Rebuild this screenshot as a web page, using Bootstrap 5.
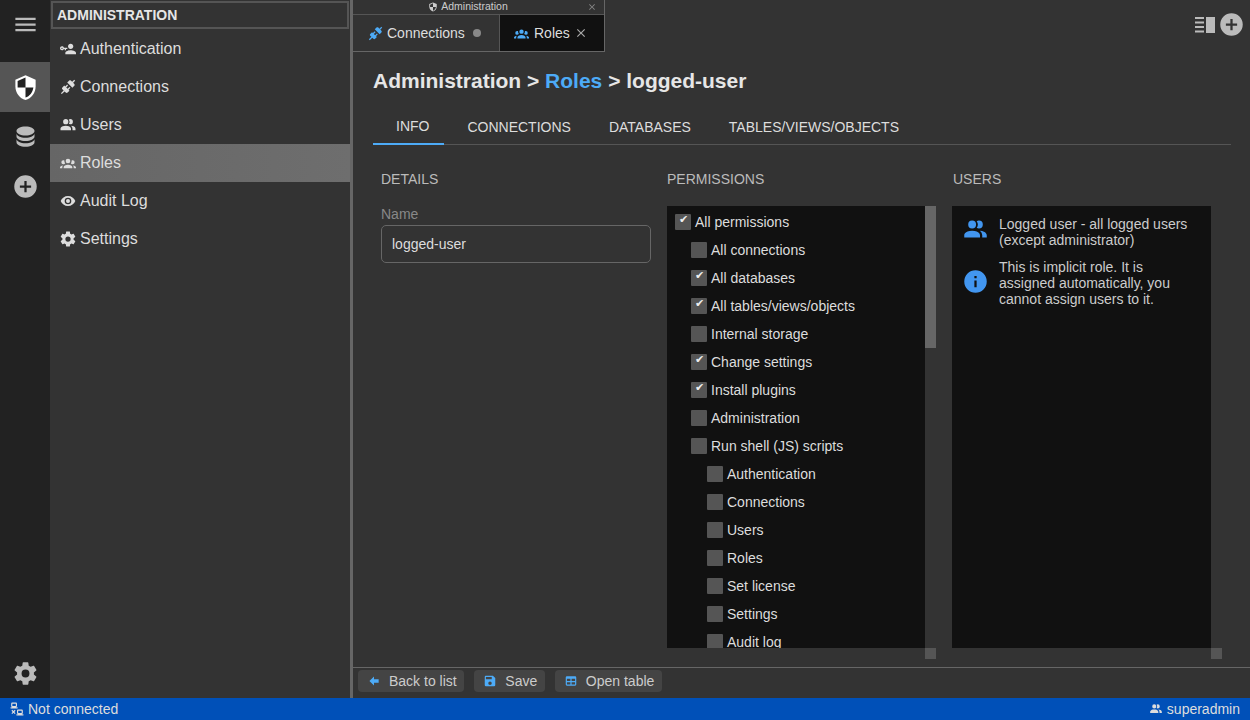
<!DOCTYPE html>
<html lang="en"><head><meta charset="utf-8"><title>Roles</title>
<link rel="stylesheet" href="https://cdn.jsdelivr.net/npm/bootstrap@5.3.0/dist/css/bootstrap.min.css">
<style>
html,body{height:100%;overflow:hidden}
body{background:#333;color:#ddd;font-family:"Liberation Sans",Arial,sans-serif;font-size:14px}
svg{fill:currentColor;display:block;flex:none}
.app-root{height:720px;width:1250px}
.app-body{height:698px}
.rail{width:50px;background:#222;color:#bbb}
.rail-btn{height:50px;width:50px}
.rail-btn svg{width:27px;height:27px}
.rail-btn.on{background:#555;color:#fff}
.rail-menu{height:48px;margin-bottom:14px}
.rail-db{height:49px}
.rail-bottom{height:50px}
.side{width:300px;background:#333}
.side-title{height:28px;margin:1px;border:2px solid #555;font-weight:700;color:#e6e6e6;padding-left:4px;line-height:24px}
.side-item{height:38px;font-size:16px;padding-left:10px;color:#ddd;gap:4px}
.side-item svg{width:16px;height:16px}
.side-item svg.ico-big{width:18px;height:18px;margin:0 -1px}
.side-item.on{background:linear-gradient(90deg,#666,#6e6e6e)}
.split{width:3px;background:#666}
.main-col{width:897px}
.tabbar{height:52px}
.tabgroup{width:252px;border-right:1px solid #666;border-bottom:1px solid #666}
.tabhead{height:15px;border-bottom:1px solid #555;font-size:10.5px;color:#ccc;gap:3px;padding-right:21px}
.tabhead-x{position:absolute;right:7px;top:2px;color:#888}
.tabhead-x svg{width:10px;height:10px}
.tabrow{height:36px}
.tab-a{width:147px;padding-left:15px;border-right:1px solid #555;gap:4px;color:#ddd}
.tab-b{width:104px;background:#111;padding-left:14px;gap:5px;color:#ddd}
.tab-a svg,.tab-b svg{width:15px;height:15px}
.blue{color:#4dabf7}
.tabdot{width:8px;height:8px;border-radius:50%;background:#888;margin-left:4px}
.tab-b .tabx{color:#aaa;width:14px;height:14px;margin-left:-1px}
.topright{gap:3px;padding:11px 5px 0 0;color:#bbb}
.topright .panel-ico{width:20px;height:16px;margin-top:6px}
.topright .plus-ico{width:27px;height:27px}
.page{padding:0 19px 0 20px;height:615px}
.page-title{font-size:21px;font-weight:700;color:#e6e6e6;margin:0;height:44px;padding-top:16px;line-height:26px}
.page-tabs{margin-top:17px;border-bottom:1px solid #555;height:32px}
.ptab{padding:0 15px 0 23px;line-height:28px;color:#ddd;text-transform:uppercase;height:31px}
.ptab.on{border-bottom:2px solid #4dabf7;margin-bottom:-1px;line-height:26px;height:32px}
.cols{padding-left:8px;height:524px}
.colm{width:286px;flex:none;padding-top:26px}
.colm-h{color:#bbb;text-transform:uppercase;line-height:16px;height:35px}
.lbl{color:#888;line-height:16px}
.inp{width:270px;height:38px;border:1px solid #666;border-radius:5px;background:#333;color:#ddd;padding:0 10px;margin-top:3px;font-size:14px;font-family:inherit;outline:0}
.scrollbox{display:grid;grid-template-columns:258px 11px;grid-template-rows:442px 11px;width:269px}
.sb-view{background:#111;overflow:hidden}
.sb-thumb{height:142px;background:#666}
.sb-corner{background:#555}
.perm-inner{padding-top:2px}
.perm{height:28px;gap:4px;color:#ddd;white-space:nowrap;padding-left:8px}
.lv1{padding-left:24px}.lv2{padding-left:40px}
.cb{width:16px;height:16px;background:#555;border-radius:1px;color:#eee;flex:none;font-size:11px;line-height:11px;text-align:center;overflow:hidden}
.users-box{grid-template-columns:259px 11px;width:270px;margin-left:-1px}
.urow{gap:10px;padding:10px 0 0 10px;line-height:16px;color:#ccc}
.urow svg{width:27px;height:27px;color:#4296f0;margin-top:0}
.urow+.urow{padding-top:11px}
.urow+.urow svg{margin-top:9px}
.bottombar{height:31px;border-top:1px solid #666;padding:2px 0 0 5px;gap:10px}
.bbtn{height:22px;background:#444;border-radius:4px;color:#ccc;padding:0 7.6px 0 9px;gap:8px;line-height:22px}
.bbtn svg{width:14px;height:14px;color:#4dabf7}
.statusbar{height:22px;background:#0050b8;color:#ddd;padding:0 10px;line-height:22px}
.statusbar svg{width:14px;height:14px}
</style></head><body>
<div class="app-root d-flex flex-column">
<div class="app-body d-flex">
 <nav class="rail d-flex flex-column">
  <div class="rail-btn rail-menu d-flex align-items-center justify-content-center"><svg viewBox="0 0 24 24"><path d="M3,6H21V8H3V6M3,11H21V13H3V11M3,16H21V18H3V16Z"/></svg></div>
  <div class="rail-btn on d-flex align-items-center justify-content-center"><svg viewBox="0 0 24 24"><path d="M12,1L3,5V11C3,16.55 6.84,21.74 12,23C17.16,21.74 21,16.55 21,11V5L12,1Z"/><path fill="#222" d="M12,3.2L5,6.3V12H12V3.2M12,12V20.9C15.7,19.9 18.4,16.3 19,12H12Z"/></svg></div>
  <div class="rail-btn rail-db d-flex align-items-center justify-content-center"><svg viewBox="0 0 24 24"><path d="M12,3C7.58,3 4,4.79 4,7C4,9.21 7.58,11 12,11C16.42,11 20,9.21 20,7C20,4.79 16.42,3 12,3M4,9V12C4,14.21 7.58,16 12,16C16.42,16 20,14.21 20,12V9C20,11.21 16.42,13 12,13C7.58,13 4,11.21 4,9M4,14V17C4,19.21 7.58,21 12,21C16.42,21 20,19.21 20,17V14C20,16.21 16.42,18 12,18C7.58,18 4,16.21 4,14Z"/></svg></div>
  <div class="rail-btn d-flex align-items-center justify-content-center"><svg viewBox="0 0 24 24"><path d="M17,13H13V17H11V13H7V11H11V7H13V11H17M12,2A10,10 0 0,0 2,12A10,10 0 0,0 12,22A10,10 0 0,0 22,12A10,10 0 0,0 12,2Z"/></svg></div>
  <div class="rail-btn rail-bottom mt-auto d-flex align-items-center justify-content-center"><svg viewBox="0 0 24 24"><path d="M12,15.5A3.5,3.5 0 0,1 8.5,12A3.5,3.5 0 0,1 12,8.5A3.5,3.5 0 0,1 15.5,12A3.5,3.5 0 0,1 12,15.5M19.43,12.97C19.47,12.65 19.5,12.33 19.5,12C19.5,11.67 19.47,11.34 19.43,11L21.54,9.37C21.73,9.22 21.78,8.95 21.66,8.73L19.66,5.27C19.54,5.05 19.27,4.96 19.05,5.05L16.56,6.05C16.04,5.66 15.5,5.32 14.87,5.07L14.5,2.42C14.46,2.18 14.25,2 14,2H10C9.75,2 9.54,2.18 9.5,2.42L9.13,5.07C8.5,5.32 7.96,5.66 7.44,6.05L4.95,5.05C4.73,4.96 4.46,5.05 4.34,5.27L2.34,8.73C2.21,8.95 2.27,9.22 2.46,9.37L4.57,11C4.53,11.34 4.5,11.67 4.5,12C4.5,12.33 4.53,12.65 4.57,12.97L2.46,14.63C2.27,14.78 2.21,15.05 2.34,15.27L4.34,18.73C4.46,18.95 4.73,19.03 4.95,18.95L7.44,17.94C7.96,18.34 8.5,18.68 9.13,18.93L9.5,21.58C9.54,21.82 9.75,22 10,22H14C14.25,22 14.46,21.82 14.5,21.58L14.87,18.93C15.5,18.67 16.04,18.34 16.56,17.94L19.05,18.95C19.27,19.03 19.54,18.95 19.66,18.73L21.66,15.27C21.78,15.05 21.73,14.78 21.54,14.63L19.43,12.97Z"/></svg></div>
 </nav>
 <aside class="side">
  <div class="side-title">ADMINISTRATION</div>
  <div class="side-item d-flex align-items-center"><svg viewBox="0 0 24 24"><path d="M11 10V12H9V14H7V12H5.8C5.4 13.2 4.3 14 3 14C1.3 14 0 12.7 0 11S1.3 8 3 8C4.3 8 5.4 8.8 5.8 10H11M3 10C2.4 10 2 10.4 2 11S2.4 12 3 12 4 11.6 4 11 3.6 10 3 10M16 14C18.7 14 24 15.3 24 18V20H8V18C8 15.3 13.3 14 16 14M16 12C13.8 12 12 10.2 12 8S13.8 4 16 4 20 5.8 20 8 18.2 12 16 12Z"/></svg>Authentication</div>
  <div class="side-item d-flex align-items-center"><svg viewBox="0 0 24 24"><path d="M21.4 7.5C22.2 8.3 22.2 9.6 21.4 10.3L18.6 13.1L10.8 5.3L13.6 2.5C14.4 1.7 15.7 1.7 16.5 2.5L18.3 4.3L21.3 1.3L22.7 2.7L19.7 5.7L21.4 7.5M15.6 13.3L14.2 11.9L11.4 14.7L9.3 12.6L12.1 9.8L10.7 8.4L7.9 11.2L6.4 9.8L3.6 12.6C2.8 13.4 2.8 14.7 3.6 15.4L5.4 17.2L1.4 21.2L2.8 22.6L6.8 18.6L8.6 20.4C9.4 21.2 10.7 21.2 11.4 20.4L14.2 17.6L12.8 16.2L15.6 13.3Z"/></svg>Connections</div>
  <div class="side-item d-flex align-items-center"><svg class="ico-big" viewBox="0 0 24 24"><path d="M16 17V19H2V17S2 13 9 13 16 17 16 17M12.5 7.5A3.5 3.5 0 1 0 9 11A3.5 3.5 0 0 0 12.5 7.5M15.94 13A5.32 5.32 0 0 1 18 17V19H22V17S22 13.37 15.94 13M15 4A3.39 3.39 0 0 0 13.07 4.59A5 5 0 0 1 13.07 10.41A3.39 3.39 0 0 0 15 11A3.5 3.5 0 0 0 15 4Z"/></svg>Users</div>
  <div class="side-item on d-flex align-items-center"><svg viewBox="0 0 24 24"><path d="M12,5.5A3.5,3.5 0 0,1 15.5,9A3.5,3.5 0 0,1 12,12.5A3.5,3.5 0 0,1 8.5,9A3.5,3.5 0 0,1 12,5.5M5,8C5.56,8 6.08,8.15 6.53,8.42C6.38,9.85 6.8,11.27 7.66,12.38C7.16,13.34 6.16,14 5,14A3,3 0 0,1 2,11A3,3 0 0,1 5,8M19,8A3,3 0 0,1 22,11A3,3 0 0,1 19,14C17.84,14 16.84,13.34 16.34,12.38C17.2,11.27 17.62,9.85 17.47,8.42C17.92,8.15 18.44,8 19,8M5.5,18.25C5.5,16.18 8.41,14.5 12,14.5C15.59,14.5 18.5,16.18 18.5,18.25V20H5.5V18.25M0,20V18.5C0,17.11 1.89,15.94 4.45,15.6C3.86,16.28 3.5,17.22 3.5,18.25V20H0M24,20H20.5V18.25C20.5,17.22 20.14,16.28 19.55,15.6C22.11,15.94 24,17.11 24,18.5V20Z"/></svg>Roles</div>
  <div class="side-item d-flex align-items-center"><svg viewBox="0 0 24 24"><path d="M12,9A3,3 0 0,0 9,12A3,3 0 0,0 12,15A3,3 0 0,0 15,12A3,3 0 0,0 12,9M12,17A5,5 0 0,1 7,12A5,5 0 0,1 12,7A5,5 0 0,1 17,12A5,5 0 0,1 12,17M12,4.5C7,4.5 2.73,7.61 1,12C2.73,16.39 7,19.5 12,19.5C17,19.5 21.27,16.39 23,12C21.27,7.61 17,4.5 12,4.5Z"/></svg>Audit Log</div>
  <div class="side-item d-flex align-items-center"><svg class="ico-big" viewBox="0 0 24 24"><path d="M12,15.5A3.5,3.5 0 0,1 8.5,12A3.5,3.5 0 0,1 12,8.5A3.5,3.5 0 0,1 15.5,12A3.5,3.5 0 0,1 12,15.5M19.43,12.97C19.47,12.65 19.5,12.33 19.5,12C19.5,11.67 19.47,11.34 19.43,11L21.54,9.37C21.73,9.22 21.78,8.95 21.66,8.73L19.66,5.27C19.54,5.05 19.27,4.96 19.05,5.05L16.56,6.05C16.04,5.66 15.5,5.32 14.87,5.07L14.5,2.42C14.46,2.18 14.25,2 14,2H10C9.75,2 9.54,2.18 9.5,2.42L9.13,5.07C8.5,5.32 7.96,5.66 7.44,6.05L4.95,5.05C4.73,4.96 4.46,5.05 4.34,5.27L2.34,8.73C2.21,8.95 2.27,9.22 2.46,9.37L4.57,11C4.53,11.34 4.5,11.67 4.5,12C4.5,12.33 4.53,12.65 4.57,12.97L2.46,14.63C2.27,14.78 2.21,15.05 2.34,15.27L4.34,18.73C4.46,18.95 4.73,19.03 4.95,18.95L7.44,17.94C7.96,18.34 8.5,18.68 9.13,18.93L9.5,21.58C9.54,21.82 9.75,22 10,22H14C14.25,22 14.46,21.82 14.5,21.58L14.87,18.93C15.5,18.67 16.04,18.34 16.56,17.94L19.05,18.95C19.27,19.03 19.54,18.95 19.66,18.73L21.66,15.27C21.78,15.05 21.73,14.78 21.54,14.63L19.43,12.97Z"/></svg>Settings</div>
 </aside>
 <div class="split"></div>
 <main class="main-col d-flex flex-column">
  <div class="tabbar d-flex justify-content-between">
   <div class="tabgroup">
    <div class="tabhead position-relative d-flex align-items-center justify-content-center"><svg width="10" height="10" viewBox="0 0 24 24"><path d="M12,1L3,5V11C3,16.55 6.84,21.74 12,23C17.16,21.74 21,16.55 21,11V5L12,1Z"/><path fill="#333" d="M12,3.2L5,6.3V12H12V3.2M12,12V20.9C15.7,19.9 18.4,16.3 19,12H12Z"/></svg>Administration<span class="tabhead-x"><svg viewBox="0 0 24 24"><path d="M19,6.41L17.59,5L12,10.59L6.41,5L5,6.41L10.59,12L5,17.59L6.41,19L12,13.41L17.59,19L19,17.59L13.41,12L19,6.41Z"/></svg></span></div>
    <div class="tabrow d-flex">
     <div class="tab-a d-flex align-items-center"><svg class="blue" viewBox="0 0 24 24"><path d="M21.4 7.5C22.2 8.3 22.2 9.6 21.4 10.3L18.6 13.1L10.8 5.3L13.6 2.5C14.4 1.7 15.7 1.7 16.5 2.5L18.3 4.3L21.3 1.3L22.7 2.7L19.7 5.7L21.4 7.5M15.6 13.3L14.2 11.9L11.4 14.7L9.3 12.6L12.1 9.8L10.7 8.4L7.9 11.2L6.4 9.8L3.6 12.6C2.8 13.4 2.8 14.7 3.6 15.4L5.4 17.2L1.4 21.2L2.8 22.6L6.8 18.6L8.6 20.4C9.4 21.2 10.7 21.2 11.4 20.4L14.2 17.6L12.8 16.2L15.6 13.3Z"/></svg>Connections<span class="tabdot"></span></div>
     <div class="tab-b d-flex align-items-center"><svg class="blue" viewBox="0 0 24 24"><path d="M12,5.5A3.5,3.5 0 0,1 15.5,9A3.5,3.5 0 0,1 12,12.5A3.5,3.5 0 0,1 8.5,9A3.5,3.5 0 0,1 12,5.5M5,8C5.56,8 6.08,8.15 6.53,8.42C6.38,9.85 6.8,11.27 7.66,12.38C7.16,13.34 6.16,14 5,14A3,3 0 0,1 2,11A3,3 0 0,1 5,8M19,8A3,3 0 0,1 22,11A3,3 0 0,1 19,14C17.84,14 16.84,13.34 16.34,12.38C17.2,11.27 17.62,9.85 17.47,8.42C17.92,8.15 18.44,8 19,8M5.5,18.25C5.5,16.18 8.41,14.5 12,14.5C15.59,14.5 18.5,16.18 18.5,18.25V20H5.5V18.25M0,20V18.5C0,17.11 1.89,15.94 4.45,15.6C3.86,16.28 3.5,17.22 3.5,18.25V20H0M24,20H20.5V18.25C20.5,17.22 20.14,16.28 19.55,15.6C22.11,15.94 24,17.11 24,18.5V20Z"/></svg>Roles<svg class="tabx" viewBox="0 0 24 24"><path d="M19,6.41L17.59,5L12,10.59L6.41,5L5,6.41L10.59,12L5,17.59L6.41,19L12,13.41L17.59,19L19,17.59L13.41,12L19,6.41Z"/></svg></div>
    </div>
   </div>
   <div class="topright d-flex align-items-start">
    <svg class="panel-ico" viewBox="0 0 20 16"><path d="M0 0h9v2H0zM0 4.500h9v2H0zM0 9h9v2H0zM0 13.500h9v2H0z"/><path d="M11 0h9v16h-9z"/></svg>
    <svg class="plus-ico" viewBox="0 0 24 24"><path d="M17,13H13V17H11V13H7V11H11V7H13V11H17M12,2A10,10 0 0,0 2,12A10,10 0 0,0 12,22A10,10 0 0,0 22,12A10,10 0 0,0 12,2Z"/></svg>
   </div>
  </div>
  <div class="page">
   <h1 class="page-title">Administration &gt; <span class="blue">Roles</span> &gt; logged-user</h1>
   <div class="page-tabs d-flex">
    <div class="ptab on">Info</div><div class="ptab">Connections</div><div class="ptab">Databases</div><div class="ptab">Tables/Views/Objects</div>
   </div>
   <div class="cols d-flex">
    <section class="colm">
     <div class="colm-h">Details</div>
     <div class="lbl">Name</div>
     <input class="inp d-block" value="logged-user">
    </section>
    <section class="colm">
     <div class="colm-h">Permissions</div>
     <div class="scrollbox">
      <div class="sb-view"><div class="perm-inner">
      <div class="perm d-flex align-items-center"><span class="cb">✔</span>All permissions</div>
      <div class="perm lv1 d-flex align-items-center"><span class="cb"></span>All connections</div>
      <div class="perm lv1 d-flex align-items-center"><span class="cb">✔</span>All databases</div>
      <div class="perm lv1 d-flex align-items-center"><span class="cb">✔</span>All tables/views/objects</div>
      <div class="perm lv1 d-flex align-items-center"><span class="cb"></span>Internal storage</div>
      <div class="perm lv1 d-flex align-items-center"><span class="cb">✔</span>Change settings</div>
      <div class="perm lv1 d-flex align-items-center"><span class="cb">✔</span>Install plugins</div>
      <div class="perm lv1 d-flex align-items-center"><span class="cb"></span>Administration</div>
      <div class="perm lv1 d-flex align-items-center"><span class="cb"></span>Run shell (JS) scripts</div>
      <div class="perm lv2 d-flex align-items-center"><span class="cb"></span>Authentication</div>
      <div class="perm lv2 d-flex align-items-center"><span class="cb"></span>Connections</div>
      <div class="perm lv2 d-flex align-items-center"><span class="cb"></span>Users</div>
      <div class="perm lv2 d-flex align-items-center"><span class="cb"></span>Roles</div>
      <div class="perm lv2 d-flex align-items-center"><span class="cb"></span>Set license</div>
      <div class="perm lv2 d-flex align-items-center"><span class="cb"></span>Settings</div>
      <div class="perm lv2 d-flex align-items-center"><span class="cb"></span>Audit log</div>
      </div></div>
      <div class="sb-track"><div class="sb-thumb"></div></div>
      <div></div><div class="sb-corner"></div>
     </div>
    </section>
    <section class="colm">
     <div class="colm-h">Users</div>
     <div class="scrollbox users-box">
      <div class="sb-view">
      <div class="urow d-flex"><svg viewBox="0 0 24 24"><path d="M16 17V19H2V17S2 13 9 13 16 17 16 17M12.5 7.5A3.5 3.5 0 1 0 9 11A3.5 3.5 0 0 0 12.5 7.5M15.94 13A5.32 5.32 0 0 1 18 17V19H22V17S22 13.37 15.94 13M15 4A3.39 3.39 0 0 0 13.07 4.59A5 5 0 0 1 13.07 10.41A3.39 3.39 0 0 0 15 11A3.5 3.5 0 0 0 15 4Z"/></svg><div>Logged user - all logged users<br>(except administrator)</div></div>
      <div class="urow d-flex"><svg viewBox="0 0 24 24"><path d="M13,9H11V7H13M13,17H11V11H13M12,2A10,10 0 0,0 2,12A10,10 0 0,0 12,22A10,10 0 0,0 22,12A10,10 0 0,0 12,2Z"/></svg><div>This is implicit role. It is<br>assigned automatically, you<br>cannot assign users to it.</div></div>
      </div>
      <div class="sb-track"></div>
      <div></div><div class="sb-corner"></div>
     </div>
    </section>
   </div>
  </div>
  <div class="bottombar d-flex align-items-start">
   <div class="bbtn d-flex align-items-center"><svg viewBox="0 0 24 24"><path d="M20,9V15H12V19.84L4.16,12L12,4.16V9H20Z"/></svg>Back to list</div>
   <div class="bbtn d-flex align-items-center"><svg viewBox="0 0 24 24"><path d="M15,9H5V5H15M12,19A3,3 0 0,1 9,16A3,3 0 0,1 12,13A3,3 0 0,1 15,16A3,3 0 0,1 12,19M17,3H5C3.89,3 3,3.9 3,5V19A2,2 0 0,0 5,21H19A2,2 0 0,0 21,19V7L17,3Z"/></svg>Save</div>
   <div class="bbtn d-flex align-items-center"><svg viewBox="0 0 24 24"><path d="M5,4H19A2,2 0 0,1 21,6V18A2,2 0 0,1 19,20H5A2,2 0 0,1 3,18V6A2,2 0 0,1 5,4M5,8V12H11V8H5M13,8V12H19V8H13M5,14V18H11V14H5M13,14V18H19V14H13Z"/></svg>Open table</div>
  </div>
 </main>
</div>
<footer class="statusbar d-flex justify-content-between align-items-center">
 <div class="d-flex align-items-center gap-1"><svg viewBox="0 0 24 24"><path d="M4,1C2.89,1 2,1.89 2,3V7C2,8.11 2.89,9 4,9H1V11H13V9H10C11.11,9 12,8.11 12,7V3C12,1.89 11.11,1 10,1H4M4,3H10V7H4V3M14,13C12.89,13 12,13.89 12,15V19C12,20.11 12.89,21 14,21H11V23H23V21H20C21.11,21 22,20.11 22,19V15C22,13.89 21.11,13 20,13H14M3.88,13.46L2.46,14.88L4.59,17L2.46,19.12L3.88,20.54L6,18.41L8.12,20.54L9.54,19.12L7.41,17L9.54,14.88L8.12,13.46L6,15.59L3.88,13.46M14,15H20V19H14V15Z"/></svg>Not connected</div>
 <div class="d-flex align-items-center gap-1"><svg viewBox="0 0 24 24"><path d="M16 17V19H2V17S2 13 9 13 16 17 16 17M12.5 7.5A3.5 3.5 0 1 0 9 11A3.5 3.5 0 0 0 12.5 7.5M15.94 13A5.32 5.32 0 0 1 18 17V19H22V17S22 13.37 15.94 13M15 4A3.39 3.39 0 0 0 13.07 4.59A5 5 0 0 1 13.07 10.41A3.39 3.39 0 0 0 15 11A3.5 3.5 0 0 0 15 4Z"/></svg>superadmin</div>
</footer>
</div>
<script src="https://cdn.jsdelivr.net/npm/bootstrap@5.3.0/dist/js/bootstrap.bundle.min.js"></script>
</body></html>
